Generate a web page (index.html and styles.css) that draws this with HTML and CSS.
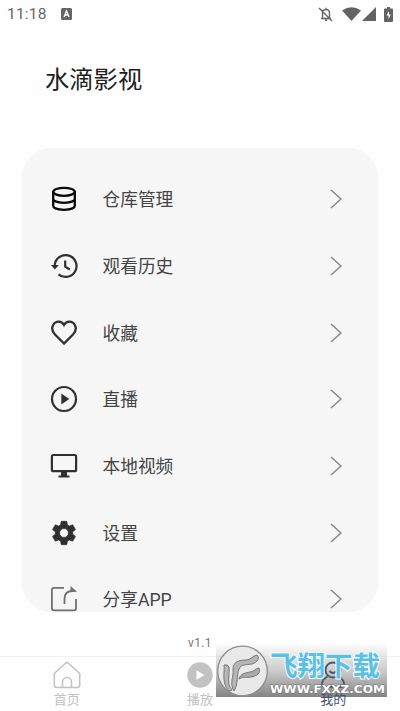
FILE: index.html
```html
<!DOCTYPE html>
<html lang="zh-CN">
<head>
<meta charset="utf-8">
<title>水滴影视</title>
<link rel="stylesheet" href="styles.css">
</head>
<body>
<div class="app">
  <header class="status">
    <span class="clock">11:18</span>
    <svg class="badge" viewBox="0 0 11 12"><rect width="11" height="12" rx="1.5" fill="#666"/><path d="M3 9 5.5 3 8 9M4 7h3" fill="none" stroke="#fff" stroke-width="1.3"/></svg>
    <div class="status-icons">
      <svg width="16" height="16" viewBox="0 0 16 16" fill="none" stroke="#666" stroke-width="1.4"><path d="M3 12.500h10M4.500 12V7.300C4.500 5 6 3.500 8 3.500s3.500 1.500 3.500 3.800V12M8 3.500V1.700M6.800 14.200h2.400M1 2l13 13"/></svg>
      <svg width="19" height="14" viewBox="0 0 19 14"><path d="M0 3.5Q9.5-3 19 3.5L9.5 14Z" fill="#636363"/></svg>
      <svg width="14" height="14" viewBox="0 0 14 14"><path d="M14 0v14H0Z" fill="#636363"/></svg>
      <svg class="battery" width="9" height="15" viewBox="0 0 9 15"><path d="M3 0h3v1.5h2q1 0 1 1V14q0 1-1 1H1q-1 0-1-1V2.500q0-1 1-1h2Z" fill="#636363"/><path d="M5 4 2.500 8.500h2V12l2.400-4.500H5Z" fill="#fff"/></svg>
    </div>
  </header>
  <h1 class="title">水滴影视</h1>
  <main class="card">
    <div class="row">
      <svg class="icon" viewBox="0 0 28 28" fill="none" stroke="#080808" stroke-width="2.300"><ellipse cx="14" cy="6.800" rx="10.800" ry="4"/><path d="M3.200 6.800v14c0 2.300 4.500 4 10.800 4s10.800-1.700 10.800-4v-14M3.200 13.800c0 2.300 4.500 4 10.800 4s10.800-1.700 10.800-4"/></svg>
      <span class="label">仓库管理</span><svg class="arrow" viewBox="0 0 12 20"><path d="m1 1 10 9-10 9"/></svg>
    </div>
    <div class="row">
      <svg class="icon" viewBox="0 0 28 28" fill="none" stroke="#303030" stroke-width="2.200"><path d="M4.700 14A10.900 10.900 0 1 1 8.500 22.300M15.200 8.500v6.200l4.600 2.800"/><path d="M1 13h7.800L4.900 17.500Z" fill="#303030" stroke="none"/></svg>
      <span class="label">观看历史</span><svg class="arrow" viewBox="0 0 12 20"><path d="m1 1 10 9-10 9"/></svg>
    </div>
    <div class="row">
      <svg class="icon" viewBox="0 0 28 28" fill="none" stroke="#303030" stroke-width="2.300"><path d="M14 24.500 5 15.500C-1 9 4 2.700 8.700 2.700c2.400 0 4.200 1.200 5.300 3.200 1.100-2 2.900-3.200 5.300-3.200C24 2.700 29 9 23 15.500Z"/></svg>
      <span class="label">收藏</span><svg class="arrow" viewBox="0 0 12 20"><path d="m1 1 10 9-10 9"/></svg>
    </div>
    <div class="row">
      <svg class="icon" viewBox="0 0 28 28"><circle cx="14" cy="14" r="12" fill="none" stroke="#303030" stroke-width="2.200"/><path d="m11.300 8.500 8 5.500-8 5.500Z" fill="#303030"/></svg>
      <span class="label">直播</span><svg class="arrow" viewBox="0 0 12 20"><path d="m1 1 10 9-10 9"/></svg>
    </div>
    <div class="row">
      <svg class="icon" viewBox="0 0 28 28"><rect x="1.900" y="3" width="24.200" height="16.200" rx="1.500" fill="none" stroke="#303030" stroke-width="2.200"/><path d="M11 20h6v3.500h2.500v2h-11v-2H11Z" fill="#303030"/></svg>
      <span class="label">本地视频</span><svg class="arrow" viewBox="0 0 12 20"><path d="m1 1 10 9-10 9"/></svg>
    </div>
    <div class="row">
      <svg class="icon" viewBox="0 0 24 24"><path fill="#303030" stroke="#303030" stroke-width=".6" d="M19.430 12.980c.040-.320.070-.640.070-.980s-.030-.660-.070-.980l2.110-1.650c.190-.150.240-.420.120-.640l-2-3.460c-.120-.220-.390-.300-.610-.220l-2.490 1c-.520-.400-1.080-.730-1.690-.980l-.380-2.650C14.460 2.180 14.250 2 14 2h-4c-.250 0-.460.180-.490.420l-.380 2.650c-.610.250-1.170.590-1.690.980l-2.490-1c-.230-.090-.490 0-.610.220l-2 3.460c-.130.220-.070.490.120.640l2.110 1.650c-.040.320-.070.650-.070.980s.030.660.070.980l-2.110 1.650c-.190.150-.240.420-.120.640l2 3.460c.120.220.390.300.610.220l2.490-1c.520.400 1.080.730 1.690.980l.380 2.650c.030.240.240.420.490.420h4c.250 0 .460-.180.490-.420l.380-2.650c.610-.250 1.170-.590 1.690-.980l2.490 1c.230.090.490 0 .610-.220l2-3.460c.120-.220.070-.490-.120-.640ZM12 15.800a3.800 3.800 0 1 1 0-7.600 3.800 3.800 0 0 1 0 7.600Z"/></svg>
      <span class="label">设置</span><svg class="arrow" viewBox="0 0 12 20"><path d="m1 1 10 9-10 9"/></svg>
    </div>
    <div class="row">
      <svg class="icon" viewBox="0 0 28 28" fill="none" stroke="#707070" stroke-width="1.800"><path d="M14 2.800H4q-2.100 0-2.100 2v18.500q0 2 2.100 2h20q2 0 2-2V14M14.500 19v-5q0-8 8-8h3"/><path d="m20.500 1 6.500 5.800h-6.500Z" fill="#707070" stroke="none"/></svg>
      <span class="label">分享APP</span><svg class="arrow" viewBox="0 0 12 20"><path d="m1 1 10 9-10 9"/></svg>
    </div>
  </main>
  <div class="version">v1.1</div>
  <nav class="tabs">
    <div class="tab">
      <svg viewBox="0 0 28 28" fill="none" stroke="#c2c2c2" stroke-width="1.500"><path d="M1.300 12.500 12.500 2.300q1.500-1.300 3 0l11.200 10.200V24q0 2.500-2.500 2.500H3.800Q1.300 26.500 1.300 24ZM9.500 26v-5a4.500 4.500 0 0 1 9 0v5"/></svg>
      <span>首页</span>
    </div>
    <div class="tab">
      <svg viewBox="0 0 28 28"><circle cx="14" cy="14" r="12.700" fill="#c2c2c2"/><path d="m10.500 9.200 8 4.800-8 4.800Z" fill="#fff"/></svg>
      <span>播放</span>
    </div>
    <div class="tab active">
      <svg viewBox="0 0 28 28" fill="none" stroke="#4d586a" stroke-width="1.900"><circle cx="14" cy="9" r="7.500"/><path d="M8.500 15.500C5 17.500 3 20 3 23q0 3 3 3h16q3 0 3-3c0-3-2-5.500-5.500-7.500M10.500 10q3.500 4 7 0"/></svg>
      <span>我的</span>
    </div>
  </nav>
  <aside class="mark">
    <svg class="mark-logo" viewBox="0 0 54 52"><circle cx="26.500" cy="26" r="24.800" fill="#e9e9e9" stroke="#8c8c8c" stroke-width="1.300"/><path d="M13 46C5 38 9 27 8 20q4-1 5 2c1 9-3 16 3 23ZM18 46c-5-8 0-14-1-22 0-7 6-9 13-9 5 0 6-4 11-5 3 3 1 7-5 9-6 1-11 0-13 5-3 7 0 14-5 22Z" fill="#b5b5b5" stroke="#777"/><path d="M23 34c1-5 6-6 11-7 4 0 6-4 9-4 2 5-2 8-8 9-5 1-7-1-12 2Z" fill="#aaa" stroke="#777"/></svg>
    <div class="mark-copy">
      <strong>飞翔下载</strong>
      <svg class="mark-url" viewBox="0 0 116 11"><text x="0" y="9.500" textLength="115" lengthAdjust="spacingAndGlyphs">WWW.FXXZ.COM</text></svg>
    </div>
  </aside>
</div>
</body>
</html>
```
FILE: styles.css
```css
* { box-sizing: border-box; }
body { margin: 0; background: #fefefe; font-family: Roboto, "Noto Sans CJK SC", sans-serif; }
svg { display: block; flex-shrink: 0; }
.app { position: relative; width: 400px; height: 711px; overflow: hidden; display: flex; flex-direction: column; }
.status { height: 28px; display: flex; align-items: center; padding: 0 7px; color: #666; }
.clock { width: 54px; font-size: 15.500px; letter-spacing: .2px; }
.badge { width: 11px; height: 12px; }
.status-icons { margin-left: auto; display: flex; align-items: center; gap: 1px; }
.status-icons svg:first-child { margin-right: 7px; }
.status-icons .battery { margin-left: 7px; }
.title { margin: 34px 0 0 45px; height: 36px; font-size: 24.300px; line-height: 36px; font-weight: 400; color: #202020; }
.card { margin: 50px 22px 0; height: 464px; padding: 18px 36px 0 28px; border-radius: 29px; background: #f6f6f6; overflow: hidden; }
.row { height: 66.700px; display: flex; align-items: center; }
.icon { width: 28px; height: 28px; }
.label { margin-left: 24.500px; padding-top: 2px; flex: 1; font-size: 17.700px; line-height: 26px; color: #444; }
.arrow { width: 12px; height: 20px; fill: none; stroke: #858585; stroke-width: 1.400; }
.version { height: 44px; padding-top: 24px; text-align: center; font-size: 12px; line-height: 14px; letter-spacing: .4px; color: #777; }
.tabs { height: 55px; display: grid; grid-template-columns: repeat(3, 1fr); border-top: 1px solid #f1f1f1; }
.tab { display: flex; flex-direction: column; align-items: center; padding-top: 4px; color: #c2c2c2; font-size: 13px; line-height: 19px; }
.tab svg { width: 28px; height: 28px; }
.tab span { height: 14px; margin-top: 4px; line-height: 14px; }
.tab.active { position: relative; z-index: 1; color: #43516a; }
.mark { position: absolute; left: 216px; top: 645px; width: 171px; height: 52px; display: flex; background: linear-gradient(rgba(240,240,240,.3), rgba(190,190,190,.8) 50%, rgba(125,125,125,.95)); }
.mark-logo { width: 54px; height: 52px; }
.mark-copy { position: relative; z-index: 2; flex: 1; padding-top: 7px; }
.mark strong { display: block; height: 31px; line-height: 30px; font-size: 27.500px; font-weight: 700; color: #5cc0e4; white-space: nowrap; -webkit-text-stroke: 2px #f4fbfe; paint-order: stroke fill; }
.mark-url { width: 116px; height: 11px; overflow: visible; }
.mark-url text { font: bold 11px "DejaVu Sans", sans-serif; fill: #fff; stroke: #777; stroke-width: 1px; paint-order: stroke; }
.mark { z-index: auto; }
```
